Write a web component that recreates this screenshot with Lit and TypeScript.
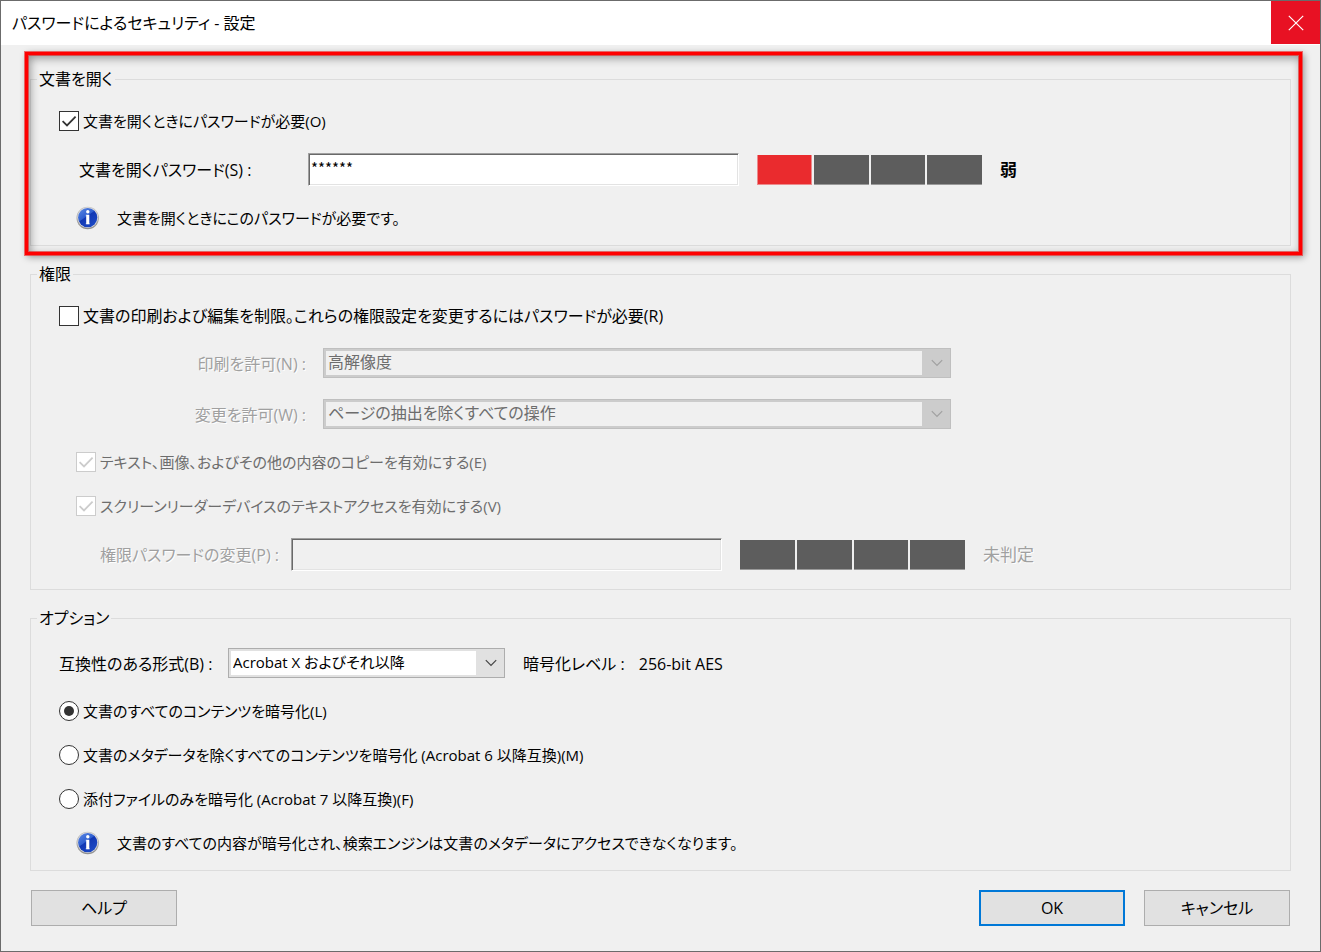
import { LitElement, html, css, svg } from "lit";
import { customElement, property, state } from "lit/decorators.js";

const shared = css`
  :host {
    display: block;
  }
  *,
  *::before,
  *::after {
    box-sizing: border-box;
  }
`;

/* Four-step password strength indicator. */
@customElement("strength-meter")
class StrengthMeter extends LitElement {
  @property({ type: Number }) level = 0;

  static styles = [
    shared,
    css`
      .bars {
        display: grid;
        grid-template-columns: repeat(4, 1fr);
        gap: 2px;
        width: 225px;
        height: 30px;
      }
      .bar {
        background: #5d5d5d;
        border-bottom: 1px solid #9a9a9a;
      }
      .bar.on {
        background: #ea2b2e;
        border: solid #ec8a8c;
        border-width: 0 1px 1px;
      }
    `,
  ];

  render() {
    return html`<div class="bars">
      ${[1, 2, 3, 4].map((n) => html`<div class="bar ${n <= this.level ? "on" : ""}"></div>`)}
    </div>`;
  }
}

@customElement("info-icon")
class InfoIcon extends LitElement {
  static styles = [
    shared,
    css`
      svg {
        display: block;
        width: 24px;
        height: 24px;
      }
    `,
  ];

  render() {
    return html`<svg viewBox="0 0 24 24" aria-hidden="true">
      <defs>
        <linearGradient id="rim" x1="0" y1="0" x2="0" y2="1">
          <stop offset="0" stop-color="#c4c4c4" />
          <stop offset="1" stop-color="#8f8f8f" />
        </linearGradient>
        <linearGradient id="ball" x1="0" y1="0" x2="0.7" y2="1">
          <stop offset="0" stop-color="#5d8ae6" />
          <stop offset="0.48" stop-color="#2f5fd0" />
          <stop offset="0.52" stop-color="#1238b4" />
          <stop offset="1" stop-color="#1c49c4" />
        </linearGradient>
      </defs>
      <circle cx="11.7" cy="12" r="11.2" fill="url(#rim)" />
      <circle cx="11.7" cy="11.6" r="10.4" fill="#dcdce0" />
      <circle cx="11.7" cy="11.6" r="9.6" fill="url(#ball)" />
      <circle cx="11.8" cy="5.8" r="1.7" fill="#fff" />
      <path d="M10.2 8.8h3.1v9.4h-3.1z" fill="#fff" />
      <path d="M9.7 8.8h1v1h-1zM9.7 17.2h4.2v1h-4.2z" fill="#fff" opacity="0.5" />
    </svg>`;
  }
}

@customElement("app-root")
class AppRoot extends LitElement {
  @state() private needsOpenPassword = true;
  @state() private encryption = "all";

  static styles = [
    shared,
    css`
      :host {
        font-family: "Open Sans", "Noto Sans CJK JP", sans-serif;
        font-size: 16px;
        line-height: 24px;
        font-feature-settings: "palt";
        color: #000;
      }
      button,
      input,
      select {
        font: inherit;
        font-feature-settings: inherit;
        color: inherit;
        margin: 0;
      }
      .dialog {
        display: flex;
        flex-direction: column;
        min-height: 100vh;
        border: 1px solid #6b6b6b;
        background: #f0f0f0;
      }
      .titlebar {
        display: flex;
        justify-content: space-between;
        height: 44px;
        background: #fff;
      }
      .title {
        margin: 0;
        padding: 10px 11px;
        font-size: 16px;
        font-weight: 400;
      }
      .close {
        display: grid;
        place-items: center;
        width: 49px;
        height: 43px;
        padding: 0;
        border: 0;
        background: #e81123;
      }
      .body {
        display: flex;
        flex-direction: column;
        gap: 17px;
        padding: 23px 29px 0;
      }
      .highlighted {
        position: relative;
      }
      .highlight {
        position: absolute;
        inset: -16px -11px -9px -5px;
        border: 3px solid #fe0000;
        box-shadow:
          0 0 0 1px rgba(240, 40, 40, 0.65),
          inset 0 0 0 1px rgba(225, 40, 40, 0.65),
          2px 2px 7px rgba(0, 0, 0, 0.4),
          inset 2px 3px 10px rgba(0, 0, 0, 0.4);
        pointer-events: none;
      }
      .group {
        min-width: 0;
        margin: 0;
        padding: 0;
        border: 1px solid #dcdcdc;
      }
      .group legend {
        height: 22px;
        margin-left: 6px;
        padding: 0 2px;
        line-height: 22px;
      }
      .rows {
        display: flex;
        flex-direction: column;
        gap: 20px;
        padding: 19px 28px 15px;
      }
      .rows.tall {
        padding-bottom: 18px;
      }
      .row {
        display: flex;
        align-items: center;
      }
      .sub {
        padding-left: 17px;
      }
      .field {
        min-height: 33px;
      }
      .combo-row {
        min-height: 31px;
      }
      .choice {
        display: flex;
        align-items: center;
        gap: 4px;
      }
      .compact {
        font-size: 15px;
      }
      .check,
      .radio {
        appearance: none;
        flex: none;
        display: grid;
        place-items: center;
        width: 20px;
        height: 20px;
        border: 1px solid #333;
        background: #fff;
      }
      .check:checked {
        background: #fff
          url("data:image/svg+xml,%3Csvg xmlns='http://www.w3.org/2000/svg' viewBox='0 0 18 18' fill='none' stroke='%23333' stroke-width='1.8'%3E%3Cpath d='M2.6 9.2 7 13.4 15.6 4.6'/%3E%3C/svg%3E")
          center / 18px 18px no-repeat;
      }
      .check:disabled {
        border-color: #ccc;
      }
      .check:disabled:checked {
        background-image: url("data:image/svg+xml,%3Csvg xmlns='http://www.w3.org/2000/svg' viewBox='0 0 18 18' fill='none' stroke='%23ccc' stroke-width='1.8'%3E%3Cpath d='M2.6 9.2 7 13.4 15.6 4.6'/%3E%3C/svg%3E");
      }
      .radio {
        border-radius: 50%;
      }
      .radio:checked::before {
        content: "";
        width: 10px;
        height: 10px;
        border-radius: 50%;
        background: #333;
      }
      .dim {
        color: #6d6d6d;
      }
      .etched {
        color: #a0a0a0;
        text-shadow: 1px 1px 0 #fff;
      }
      .text {
        width: 431px;
        height: 33px;
        padding: 0 2px 4px;
        border: 1px solid;
        border-color: #a0a0a0 #fff #fff #a0a0a0;
        box-shadow:
          inset 1px 1px 0 #696969,
          inset -1px -1px 0 #e3e3e3;
        border-radius: 0;
        background: #fff;
        font-family: "Noto Sans CJK JP", sans-serif;
        font-size: 15px;
        outline: 0;
      }
      .text:disabled {
        background: #f0f0f0;
      }
      .open-label {
        width: 249px;
        padding-left: 20px;
      }
      .perm-label {
        width: 215px;
        padding-left: 24px;
      }
      .strength {
        margin: 0 18px;
      }
      .verdict {
        font-size: 17px;
      }
      .weak {
        font-weight: 700;
      }
      .note {
        gap: 17px;
        padding-left: 17px;
      }
      .combo-label {
        width: 247px;
        text-align: right;
      }
      .compat-label {
        width: 169px;
      }
      .combo {
        display: grid;
        align-items: center;
        justify-items: end;
        margin-bottom: 1px;
      }
      .combo > * {
        grid-area: 1 / 1;
      }
      .combo.wide {
        width: 628px;
        margin-left: 17px;
      }
      .combo.narrow {
        width: 277px;
        margin-right: 18px;
      }
      .select {
        appearance: none;
        width: 100%;
        height: 30px;
        padding: 0 32px 2px 4px;
        border: 1px solid #adadad;
        border-radius: 0;
        background: linear-gradient(#fff, #fff) 2px 2px / calc(100% - 30px) calc(100% - 4px) no-repeat #e1e1e1;
        outline: 0;
      }
      .select:disabled {
        opacity: 1;
        color: #6d6d6d;
        border-color: #bfbfbf;
        background: linear-gradient(#f0f0f0, #f0f0f0) 2px 2px / calc(100% - 30px) calc(100% - 4px) no-repeat #ccc;
      }
      .arrow {
        width: 12px;
        height: 8px;
        margin-right: 8px;
        fill: none;
        stroke: #444;
        stroke-width: 1.2;
        pointer-events: none;
      }
      .select:disabled + .arrow {
        stroke: #a0a0a0;
      }
      .level {
        margin-right: 14px;
      }
      .footer {
        display: flex;
        gap: 19px;
        padding: 19px 30px 24px;
      }
      .push {
        width: 146px;
        height: 36px;
        padding: 0;
        border: 1px solid #adadad;
        background: #e1e1e1;
      }
      .push.default {
        margin-left: auto;
        border: 2px solid #0078d7;
      }
    `,
  ];

  private arrow() {
    return svg`<svg class="arrow" viewBox="0 0 12 8" aria-hidden="true"><path d="M0.8 1.2 6 6.4 11.2 1.2" /></svg>`;
  }

  private permission(id: string, label: string, value: string) {
    return html`<div class="row combo-row">
      <label class="combo-label etched" for=${id}>${label}</label>
      <div class="combo wide">
        <select class="select" id=${id} disabled>
          <option>${value}</option>
        </select>
        ${this.arrow()}
      </div>
    </div>`;
  }

  private encryptionChoice(value: string, label: string) {
    return html`<label class="choice compact">
      <input
        class="radio"
        type="radio"
        name="encryption"
        .checked=${this.encryption === value}
        @change=${() => (this.encryption = value)}
      />
      <span>${label}</span>
    </label>`;
  }

  render() {
    return html`
      <div class="dialog" role="dialog" aria-labelledby="title">
        <header class="titlebar">
          <h1 class="title" id="title">パスワードによるセキュリティ - 設定</h1>
          <button class="close" aria-label="閉じる">
            <svg width="16" height="16" viewBox="0 0 16 16" fill="none" stroke="#fff" stroke-width="1.2">
              <path d="M0.8 0.8 15.2 15.2M15.2 0.8 0.8 15.2" />
            </svg>
          </button>
        </header>

        <main class="body">
          <div class="highlighted">
            <fieldset class="group">
              <legend>文書を開く</legend>
              <div class="rows">
                <label class="choice compact">
                  <input
                    class="check"
                    type="checkbox"
                    .checked=${this.needsOpenPassword}
                    @change=${(e: Event) =>
                      (this.needsOpenPassword = (e.target as HTMLInputElement).checked)}
                  />
                  <span>文書を開くときにパスワードが必要(O)</span>
                </label>
                <div class="row field">
                  <label class="open-label" for="open-password">文書を開くパスワード(S) :</label>
                  <input class="text" id="open-password" type="text" autocomplete="off" value="******" />
                  <strength-meter class="strength" level="1"></strength-meter>
                  <span class="verdict weak">弱</span>
                </div>
                <div class="row note compact">
                  <info-icon></info-icon>
                  <span>文書を開くときにこのパスワードが必要です。</span>
                </div>
              </div>
            </fieldset>
            <div class="highlight"></div>
          </div>

          <fieldset class="group">
            <legend>権限</legend>
            <div class="rows tall">
              <label class="choice">
                <input class="check" type="checkbox" />
                <span>文書の印刷および編集を制限。これらの権限設定を変更するにはパスワードが必要(R)</span>
              </label>
              ${this.permission("printing", "印刷を許可(N) :", "高解像度")}
              ${this.permission("changes", "変更を許可(W) :", "ページの抽出を除くすべての操作")}
              <label class="choice compact sub dim">
                <input class="check" type="checkbox" checked disabled />
                <span>テキスト、画像、およびその他の内容のコピーを有効にする(E)</span>
              </label>
              <label class="choice compact sub dim">
                <input class="check" type="checkbox" checked disabled />
                <span>スクリーンリーダーデバイスのテキストアクセスを有効にする(V)</span>
              </label>
              <div class="row field sub">
                <label class="perm-label etched" for="perm-password">権限パスワードの変更(P) :</label>
                <input class="text" id="perm-password" type="text" disabled />
                <strength-meter class="strength" level="0"></strength-meter>
                <span class="verdict etched">未判定</span>
              </div>
            </div>
          </fieldset>

          <fieldset class="group">
            <legend>オプション</legend>
            <div class="rows">
              <div class="row combo-row">
                <label class="compat-label" for="compat">互換性のある形式(B) :</label>
                <div class="combo narrow compact">
                  <select class="select" id="compat">
                    <option>Acrobat X およびそれ以降</option>
                  </select>
                  ${this.arrow()}
                </div>
                <span class="level">暗号化レベル :</span>
                <span>256-bit AES</span>
              </div>
              ${this.encryptionChoice("all", "文書のすべてのコンテンツを暗号化(L)")}
              ${this.encryptionChoice("no-metadata", "文書のメタデータを除くすべてのコンテンツを暗号化 (Acrobat 6 以降互換)(M)")}
              ${this.encryptionChoice("attachments", "添付ファイルのみを暗号化 (Acrobat 7 以降互換)(F)")}
              <div class="row note compact">
                <info-icon></info-icon>
                <span>文書のすべての内容が暗号化され、検索エンジンは文書のメタデータにアクセスできなくなります。</span>
              </div>
            </div>
          </fieldset>
        </main>

        <footer class="footer">
          <button class="push">ヘルプ</button>
          <button class="push default">OK</button>
          <button class="push">キャンセル</button>
        </footer>
      </div>
    `;
  }
}
